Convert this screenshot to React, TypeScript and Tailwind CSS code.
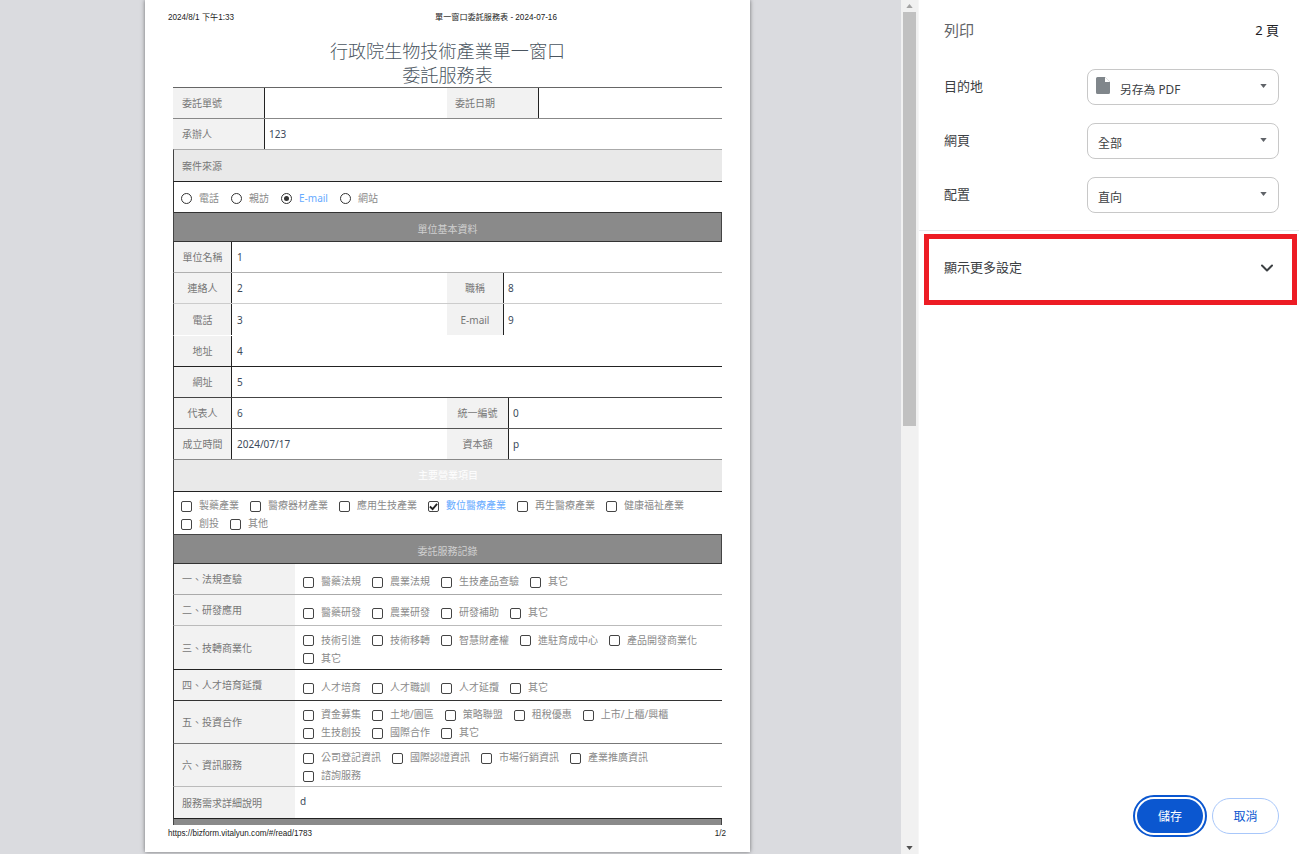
import { ChevronDown } from 'lucide-react';

const cjk = 'font-["Noto_Sans","Noto_Sans_CJK_TC",sans-serif]';

function Box({ checked }: { checked?: boolean }) {
  return (
    <span className="flex h-[11px] w-[11px] shrink-0 translate-y-[1px] items-center justify-center rounded-[2px] border-[1.5px] border-[#444]">
      {checked && (
        <svg viewBox="0 0 10 10" className="h-[9px] w-[9px]">
          <path d="M1 5l3 3 5-6" fill="none" stroke="#222" strokeWidth="2" />
        </svg>
      )}
    </span>
  );
}

function Radio({ checked }: { checked?: boolean }) {
  return (
    <span className="flex h-[11px] w-[11px] shrink-0 translate-y-[1px] items-center justify-center rounded-full border-[1.5px] border-[#333]">
      {checked && <span className="h-[5px] w-[5px] rounded-full bg-[#333]" />}
    </span>
  );
}

function Opt({ text, checked, radio }: { text: string; checked?: boolean; radio?: boolean }) {
  return (
    <span className={`flex h-[18px] items-center gap-[7px] ${radio ? 'mr-[12px]' : 'mr-[11px]'}`}>
      {radio ? <Radio checked={checked} /> : <Box checked={checked} />}
      <span className={`text-[10px] leading-none ${checked ? 'text-[#66aaff]' : 'text-[#8a8a8a]'}`}>{text}</span>
    </span>
  );
}

function Cell({ label, value, labelW, center, last }: { label: string; value?: string; labelW: string; center?: boolean; last?: boolean }) {
  return (
    <div className={`flex h-full ${last ? 'flex-1' : 'w-[274px]'}`}>
      <div className={`flex h-full shrink-0 items-center bg-[#f2f2f2] pt-[1px] text-[10px] text-[#777] ${labelW} ${center ? 'justify-center' : 'pl-[8px]'}`}>
        {label}
      </div>
      <div className="flex h-full flex-1 items-center border-l border-[#222] pt-[1px] pl-[4px] text-[10px] text-[#3c4a5a]">{value}</div>
    </div>
  );
}

function InfoRow({ h, line, label, value, label2, value2, w2 }: { h: string; line: string; label: string; value: string; label2?: string; value2?: string; w2?: string }) {
  return (
    <div className={`flex border-t border-l border-l-[#333] ${h} ${line}`}>
      <div className={`flex ${label2 ? 'w-[273px]' : 'flex-1'}`}>
        <div className="flex w-[57px] shrink-0 items-center justify-center bg-[#f2f2f2] pt-[1px] text-[10px] text-[#777]">{label}</div>
        <div className="flex flex-1 items-center border-l border-[#222] pt-[1px] pl-[5px] text-[10px] text-[#3c4a5a]">{value}</div>
      </div>
      {label2 && <Cell last center label={label2} value={value2} labelW={w2 ?? 'w-[56px]'} />}
    </div>
  );
}

function Bar({ text, line }: { text: string; line: string }) {
  return (
    <div className={`flex h-[29px] items-center justify-center border-x border-t border-x-[#444] bg-[#8a8a8a] pt-[4px] text-[10px] text-[#d0d0d0] ${line}`}>
      {text}
    </div>
  );
}

function ServiceRow({ h, line, label, items, single }: { h: string; line: string; label: string; items: string[]; single?: boolean }) {
  return (
    <div className={`flex border-t border-l border-l-[#333] ${h} ${line}`}>
      <div className="flex w-[121px] shrink-0 items-center bg-[#f2f2f2] pt-[1px] pl-[8px] text-[10px] text-[#777]">{label}</div>
      <div className={`flex flex-1 flex-wrap content-center pl-[8px] ${single ? 'pt-[4px]' : 'pt-[2px]'}`}>
        {items.map((t) => (
          <Opt key={t} text={t} />
        ))}
      </div>
    </div>
  );
}

function Sheet() {
  return (
    <div className="flex h-[852px] w-[605px] shrink-0 flex-col bg-white shadow-[0_0_4px_rgba(0,0,0,0.5)]">
      <div className="flex h-[39px] shrink-0 items-center px-[23px] pb-[3px] font-['Liberation_Sans','Noto_Sans_CJK_TC',sans-serif] text-[8.15px] text-[#222]">
        <span className="w-[267px]">2024/8/1 下午1:33</span>
        <span>單一窗口委託服務表 - 2024-07-16</span>
      </div>
      <div className="shrink-0 text-center text-[18.1px] leading-[24px] font-light text-[#4a5560]">
        <div>行政院生物技術產業單一窗口</div>
        <div>委託服務表</div>
      </div>

      <div className="mx-[28px] flex-1 overflow-hidden">
        <div className="flex h-[31px] border-t border-[#666]">
          <div className="flex w-[274px]">
            <div className="flex w-[91px] shrink-0 items-center bg-[#f2f2f2] pt-[1px] pl-[9px] text-[10px] text-[#777]">委託單號</div>
            <div className="flex-1 border-l border-[#222]" />
          </div>
          <Cell last label="委託日期" labelW="w-[91px]" />
        </div>
        <div className="flex h-[31px] border-t border-[#888]">
          <div className="flex w-[91px] shrink-0 items-center bg-[#f2f2f2] pl-[9px] text-[10px] text-[#777]">承辦人</div>
          <div className="flex flex-1 items-center border-l border-[#222] pl-[4px] text-[10px] text-[#3c4a5a]">123</div>
        </div>
        <div className="flex h-[32px] items-center border-t border-l border-t-[#aaa] border-l-[#444] bg-[#e9e9e9] pt-[1px] pl-[8px] text-[10px] text-[#777]">案件來源</div>
        <div className="flex h-[31px] items-center border-t border-l border-t-[#222] border-l-[#333] pt-[1px] pl-[7px]">
          <Opt radio text="電話" />
          <Opt radio text="親訪" />
          <Opt radio checked text="E-mail" />
          <Opt radio text="網站" />
        </div>
        <Bar text="單位基本資料" line="border-t-[#333]" />
        <InfoRow h="h-[31px]" line="border-t-[#333]" label="單位名稱" value="1" />
        <InfoRow h="h-[31px]" line="border-t-[#b0b0b0]" label="連絡人" value="2" label2="職稱" value2="8" />
        <InfoRow h="h-[32px]" line="border-t-[#ccc]" label="電話" value="3" label2="E-mail" value2="9" />
        <InfoRow h="h-[31px]" line="border-t-transparent" label="地址" value="4" />
        <InfoRow h="h-[31px]" line="border-t-[#222]" label="網址" value="5" />
        <InfoRow h="h-[31px]" line="border-t-[#444]" label="代表人" value="6" label2="統一編號" value2="0" w2="w-[61px]" />
        <InfoRow h="h-[31px]" line="border-t-[#555]" label="成立時間" value="2024/07/17" label2="資本額" value2="p" w2="w-[61px]" />
        <div className="flex h-[32px] items-center justify-center border-t border-l border-t-[#888] border-l-[#444] bg-[#e9e9e9] text-[10px] text-white">主要營業項目</div>
        <div className="flex h-[43px] flex-wrap content-start border-t border-l border-t-[#222] border-l-[#333] pt-[4px] pl-[7px]">
          <Opt text="製藥產業" />
          <Opt text="醫療器材產業" />
          <Opt text="應用生技產業" />
          <Opt checked text="數位醫療產業" />
          <Opt text="再生醫療產業" />
          <Opt text="健康福祉產業" />
          <Opt text="創投" />
          <Opt text="其他" />
        </div>
        <Bar text="委託服務記錄" line="border-t-[#444]" />
        <ServiceRow single h="h-[31px]" line="border-t-[#333]" label="一、法規查驗" items={['醫藥法規', '農業法規', '生技產品查驗', '其它']} />
        <ServiceRow single h="h-[31px]" line="border-t-[#aaa]" label="二、研發應用" items={['醫藥研發', '農業研發', '研發補助', '其它']} />
        <ServiceRow h="h-[44px]" line="border-t-[#bbb]" label="三、技轉商業化" items={['技術引進', '技術移轉', '智慧財產權', '進駐育成中心', '產品開發商業化', '其它']} />
        <ServiceRow single h="h-[31px]" line="border-t-[#222]" label="四、人才培育延攬" items={['人才培育', '人才職訓', '人才延攬', '其它']} />
        <ServiceRow h="h-[43px]" line="border-t-[#333]" label="五、投資合作" items={['資金募集', '土地/園區', '策略聯盟', '租稅優惠', '上市/上櫃/興櫃', '生技創投', '國際合作', '其它']} />
        <ServiceRow h="h-[43px]" line="border-t-[#777]" label="六、資訊服務" items={['公司登記資訊', '國際認證資訊', '市場行銷資訊', '產業推廣資訊', '諮詢服務']} />
        <div className="flex h-[32px] border-t border-l border-t-[#bbb] border-l-[#333]">
          <div className="flex w-[121px] shrink-0 items-center bg-[#f2f2f2] pt-[1px] pl-[8px] text-[10px] text-[#777]">服務需求詳細說明</div>
          <div className="pt-[7px] pl-[5px] text-[10px] text-[#3c4a5a]">d</div>
        </div>
        <div className="h-[20px] border-x border-t border-x-[#444] border-t-[#222] bg-[#8a8a8a]" />
      </div>

      <div className="flex h-[27px] shrink-0 items-center justify-between px-[24px] pb-[9px] pl-[23px] font-['Liberation_Sans',sans-serif] text-[8.15px] text-[#222]">
        <span>https://bizform.vitalyun.com/#/read/1783</span>
        <span>1/2</span>
      </div>
    </div>
  );
}

function Scrollbar() {
  return (
    <div className="flex h-full w-[17px] shrink-0 flex-col items-center bg-[#f1f1f1]">
      <div className="flex h-[12px] w-full items-center justify-center">
        <svg viewBox="0 0 8 5" className="h-[4px] w-[7px]"><path d="M4 0l4 5H0z" fill="#a3a3a3" /></svg>
      </div>
      <div className="h-[414px] w-[13px] bg-[#c1c1c1]" />
      <div className="flex-1" />
      <div className="flex h-[12px] w-full items-center justify-center pb-[1px]">
        <svg viewBox="0 0 8 5" className="h-[4px] w-[7px]"><path d="M4 5l4-5H0z" fill="#505050" /></svg>
      </div>
    </div>
  );
}

function Field({ label, value, icon }: { label: string; value: string; icon?: boolean }) {
  return (
    <div className="flex h-[36px] items-center justify-between pr-[20px] pl-[25px]">
      <span className="text-[13px] text-[#3c4043]">{label}</span>
      <div className="flex h-[36px] w-[192px] items-center rounded-[8px] border border-[#c8c8c8] pr-[11px] pl-[8px]">
        {icon ? (
          <span className="flex items-center gap-[10px]">
            <svg viewBox="0 0 14 17" className="-mt-[3px] h-[17px] w-[14px]">
              <path d="M1.5 0H9l5 5v10.5a1.5 1.5 0 0 1-1.5 1.5h-11A1.5 1.5 0 0 1 0 15.5v-14A1.5 1.5 0 0 1 1.5 0z" fill="#80868b" />
              <path d="M9 0l5 5H9z" fill="#fff" />
            </svg>
            <span className="mt-[5px] text-[11.8px] text-[#3c4043]">{value}</span>
          </span>
        ) : (
          <span className="mt-[5px] ml-[2px] text-[12px] text-[#3c4043]">{value}</span>
        )}
        <svg viewBox="0 0 8 5" className="mb-[3px] ml-auto h-[4px] w-[7px]"><path d="M0 0h8L4 5z" fill="#5f6368" /></svg>
      </div>
    </div>
  );
}

export default function App() {
  return (
    <div className={`flex h-[854px] w-[1299px] overflow-hidden bg-white ${cjk}`}>
      <div className="flex h-full w-[901px] shrink-0 items-start bg-[#dadbdf] pl-[145px]">
        <Sheet />
      </div>
      <Scrollbar />
      <div className="w-[1px] shrink-0 bg-[#f6f6f6]" />
      <div className="flex h-full flex-1 flex-col">
        <div className="flex h-[69px] shrink-0 items-start justify-between pt-[19px] pr-[20px] pl-[25px]">
          <span className="text-[15px] leading-[22px] text-[#5f6368]">列印</span>
          <span className="text-[13px] leading-[22px] text-[#202124]">2 頁</span>
        </div>
        <div className="flex shrink-0 flex-col gap-[18px]">
          <Field icon label="目的地" value="另存為 PDF" />
          <Field label="網頁" value="全部" />
          <Field label="配置" value="直向" />
        </div>
        <div className="mt-[17px] h-[1px] shrink-0 bg-[#e8eaed]" />
        <div className="mt-[3px] ml-[5px] flex h-[71px] w-[373px] shrink-0 items-center justify-between border-[5px] border-[#ed1c24] pr-[15px] pb-[4px] pl-[15px]">
          <span className="text-[13px] text-[#3c4043]">顯示更多設定</span>
          <ChevronDown size={20} strokeWidth={2.4} className="text-[#3c4043]" />
        </div>
        <div className="mt-auto mb-[17px] flex items-center justify-end gap-[5px] pr-[20px]">
          <button className="h-[42px] w-[74px] rounded-full border-[2px] border-[#0b57d0] p-[2px]">
            <span className="flex h-full w-full items-center justify-center rounded-full bg-[#0b57d0] pt-[1px] text-[12px] text-white">儲存</span>
          </button>
          <button className="flex h-[36px] w-[67px] items-center justify-center rounded-full border border-[#a8c7fa] pt-[1px] text-[12px] text-[#0b57d0]">取消</button>
        </div>
      </div>
    </div>
  );
}
